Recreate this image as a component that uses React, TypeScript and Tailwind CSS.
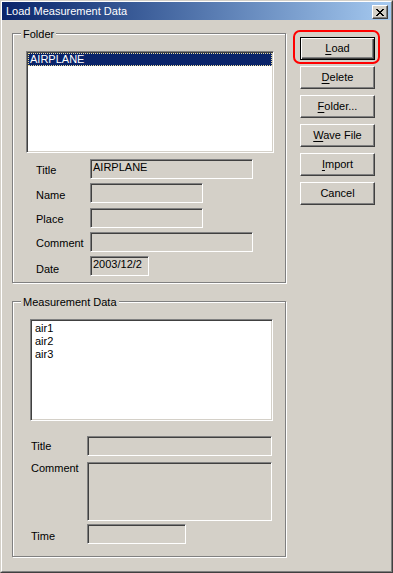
import React from "react";

const sunken =
  "border border-t-[#808080] border-l-[#808080] border-r-white border-b-white shadow-[inset_1px_1px_0_#404040,inset_-1px_-1px_0_#d4d0c8] p-[1px]";
const etched =
  "relative border border-[#808080] shadow-[inset_1px_1px_0_#fff,1px_1px_0_#fff]";
const raised =
  "border border-t-white border-l-white border-r-[#404040] border-b-[#404040] shadow-[inset_-1px_-1px_0_#808080]";

function CloseX() {
  const rows = [
    "11....11",
    ".11..11.",
    "..1111..",
    "...11...",
    "..1111..",
    ".11..11.",
    "11....11",
  ];
  return (
    <svg width="8" height="7" viewBox="0 0 8 7" shapeRendering="crispEdges">
      {rows.flatMap((r, y) =>
        r.split("").map((c, x) =>
          c === "1" ? <rect key={`${x}-${y}`} x={x} y={y} width="1" height="1" fill="#000" /> : null
        )
      )}
    </svg>
  );
}

function Btn({ children, def }: { children: React.ReactNode; def?: boolean }) {
  return (
    <div
      className={
        "w-[75px] h-[23px] flex items-center justify-center bg-[#d4d0c8] " +
        (def
          ? "border border-black shadow-[inset_1px_1px_0_#fff,inset_-1px_-1px_0_#404040,inset_-2px_-2px_0_#808080]"
          : raised)
      }
    >
      <span>{children}</span>
    </div>
  );
}

function U({ children }: { children: React.ReactNode }) {
  return <span className="underline underline-offset-[2px]">{children}</span>;
}

function Field({
  label,
  labelW,
  labelPl,
  labelPt,
  boxW,
  boxH,
  value,
  mt,
}: {
  label: string;
  labelW: string;
  labelPl: string;
  labelPt: string;
  boxW: string;
  boxH: string;
  value?: string;
  mt: string;
}) {
  return (
    <div className={"flex items-start " + mt}>
      <div className={labelW + " " + labelPl + " " + labelPt + " shrink-0"}>{label}</div>
      <div className={sunken + " bg-[#d4d0c8] overflow-hidden whitespace-nowrap " + boxW + " " + boxH}>
        <div className="pl-[1px]">{value}</div>
      </div>
    </div>
  );
}

export default function App() {
  return (
    <div className="w-[393px] h-[573px] bg-[#d4d0c8] border border-t-[#d4d0c8] border-l-[#d4d0c8] border-r-[#404040] border-b-[#404040] font-['Liberation_Sans',Arial,sans-serif] text-[11px] leading-[13px] text-black overflow-hidden">
      <div className="h-full border border-t-white border-l-white border-r-[#808080] border-b-[#808080] flex flex-col">
        {/* Title bar */}
        <div className="h-[18px] shrink-0 flex items-start bg-linear-to-r from-[#0a246a] to-[#a6caf0] pl-[4px] pr-[3px]">
          <span className="flex-1 text-white pt-[3px]">Load Measurement Data</span>
          <div className={"mt-[3px] w-[16px] h-[14px] flex items-center justify-center bg-[#d4d0c8] " + raised}>
            <CloseX />
          </div>
        </div>

        {/* Body */}
        <div className="flex flex-row items-start">
          {/* Left column */}
          <div className="ml-[10px] mt-[13px] w-[274px] flex flex-col">
            {/* Folder group */}
            <div className={etched + " h-[250px] pl-[13px] pt-[17px] flex flex-col"}>
              <div className="absolute left-[8px] top-[-6px] px-[2px] bg-[#d4d0c8]">Folder</div>
              <div className={sunken + " bg-white w-[248px] h-[102px]"}>
                <div className="h-[13px] leading-[11px] bg-[#0a246a] text-white pl-[1px] border border-dotted border-[#e8dc9c]">
                  AIRPLANE
                </div>
              </div>
              <div className="mt-[6px] flex flex-col">
                <Field label="Title" labelW="w-[64px]" labelPl="pl-[10px]" labelPt="pt-[5px]" boxW="w-[163px]" boxH="h-[20px]" value="AIRPLANE" mt="" />
                <Field label="Name" labelW="w-[64px]" labelPl="pl-[10px]" labelPt="pt-[6px]" boxW="w-[113px]" boxH="h-[20px]" mt="mt-[4px]" />
                <Field label="Place" labelW="w-[64px]" labelPl="pl-[10px]" labelPt="pt-[5px]" boxW="w-[113px]" boxH="h-[20px]" mt="mt-[5px]" />
                <Field label="Comment" labelW="w-[64px]" labelPl="pl-[10px]" labelPt="pt-[5px]" boxW="w-[163px]" boxH="h-[20px]" mt="mt-[4px]" />
                <Field label="Date" labelW="w-[64px]" labelPl="pl-[10px]" labelPt="pt-[7px]" boxW="w-[59px]" boxH="h-[20px]" value="2003/12/2" mt="mt-[4px]" />
              </div>
            </div>

            {/* Measurement Data group */}
            <div className={etched + " mt-[18px] h-[256px] pl-[17px] pt-[17px] flex flex-col"}>
              <div className="absolute left-[8px] top-[-6px] px-[2px] bg-[#d4d0c8]">Measurement Data</div>
              <div className={sunken + " bg-white w-[243px] h-[102px]"}>
                <div className="pl-[3px] pt-[1px]">
                  <div>air1</div>
                  <div>air2</div>
                  <div>air3</div>
                </div>
              </div>
              <Field label="Title" labelW="w-[57px]" labelPl="pl-[1px]" labelPt="pt-[4px]" boxW="w-[185px]" boxH="h-[20px]" mt="mt-[15px]" />
              <Field label="Comment" labelW="w-[57px]" labelPl="pl-[1px]" labelPt="pt-[0px]" boxW="w-[185px]" boxH="h-[59px]" mt="mt-[6px]" />
              <Field label="Time" labelW="w-[57px]" labelPl="pl-[1px]" labelPt="pt-[6px]" boxW="w-[99px]" boxH="h-[20px]" mt="mt-[3px]" />
            </div>
          </div>

          {/* Buttons */}
          <div className="ml-[14px] mt-[17px] w-[75px] flex flex-col gap-[6px]">
            <div className="relative">
              <Btn def>
                <U>L</U>oad
              </Btn>
              <div className="absolute -left-[7px] -top-[7px] w-[87px] h-[34px] border-2 border-[#ff0000] rounded-[7px] pointer-events-none" />
            </div>
            <Btn>
              <U>D</U>elete
            </Btn>
            <Btn>
              <U>F</U>older...
            </Btn>
            <Btn>
              <U>W</U>ave File
            </Btn>
            <Btn>
              <U>I</U>mport
            </Btn>
            <Btn>Cancel</Btn>
          </div>
        </div>
      </div>
    </div>
  );
}
